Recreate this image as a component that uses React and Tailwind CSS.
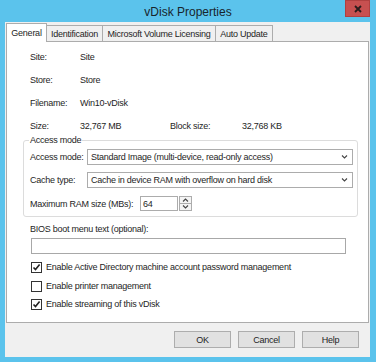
import React from 'react';

function Chevron({ up }) {
    return (
        <svg width="7" height="4" viewBox="0 0 7 4">
            <path d={up ? 'M1 3.5L3.5 1L6 3.5' : 'M1 0.5L3.5 3L6 0.5'} fill="none" stroke="#444" strokeWidth="1.1" />
        </svg>
    );
}

function Select({ value }) {
    return (
        <div className="flex h-[16px] flex-1 items-center justify-between border border-[#acacac] bg-white pl-[3px] pr-[4px]">
            <span>{value}</span>
            <Chevron />
        </div>
    );
}

function Checkbox({ checked, label }) {
    return (
        <div className="flex h-[12px] items-center">
            <span className="flex h-[11px] w-[11px] items-center justify-center border border-[#333] bg-white">
                {checked && (
                    <svg width="9" height="9" viewBox="0 0 9 9">
                        <path d="M1.5 4.5L3.5 6.6L7.6 1.6" fill="none" stroke="#222" strokeWidth="1.6" />
                    </svg>
                )}
            </span>
            <span className="ml-[4px]">{label}</span>
        </div>
    );
}

function InfoRow({ label, value }) {
    return (
        <div className="flex h-[16px] items-center">
            <span className="w-[50px]">{label}</span>
            <span>{value}</span>
        </div>
    );
}

export default function App() {
    const tabs = ['Identification', 'Microsoft Volume Licensing', 'Auto Update'];
    const tabWidths = ['w-[57px]', 'w-[114px]', 'w-[58px]'];

    return (
        <div className="flex h-[362px] w-[376px] flex-col bg-[#5bc3ec] font-['Liberation_Sans',Arial,sans-serif] text-[9px] leading-[12px] tracking-[-0.25px] text-[#1e1e1e]">
            {/* title bar */}
            <div className="flex h-[22px] items-start">
                <div className="w-[31px]" />
                <div className="flex-1 pt-[5px] text-center text-[12px] leading-[14px] tracking-normal text-[#18252c]">vDisk Properties</div>
                <div className="flex h-[17px] w-[25px] items-center justify-center border border-[#b04040] bg-[#c75050]">
                    <svg width="8" height="8" viewBox="0 0 8 8">
                        <path d="M1 1L7 7M7 1L1 7" stroke="#2a1c1c" strokeWidth="1.8" />
                    </svg>
                </div>
                <div className="w-[6px]" />
            </div>

            <div className="mb-[5px] ml-[5px] mr-[6px] flex flex-1 flex-col bg-[#f0f0f0] px-[1px] pt-[1px]">
                {/* tabs */}
                <div className="flex h-[18px] items-end">
                    <div className="relative z-10 mb-[-1px] flex h-[19px] w-[41px] items-center justify-center border border-b-0 border-[#acacac] bg-white">
                        General
                    </div>
                    {tabs.map((t, i) => (
                        <div
                            key={t}
                            className={`ml-[-1px] flex h-[16px] items-center justify-center border border-b-0 border-[#acacac] bg-[#f0f0f0] ${tabWidths[i]}`}
                        >
                            {t}
                        </div>
                    ))}
                </div>

                {/* panel */}
                <div className="flex flex-1 flex-col border border-[#acacac] bg-white">
                    <div className="ml-[23px] mt-[7px] flex flex-col gap-[7px]">
                        <InfoRow label="Site:" value="Site" />
                        <InfoRow label="Store:" value="Store" />
                        <InfoRow label="Filename:" value="Win10-vDisk" />
                        <div className="flex h-[16px] items-center">
                            <span className="w-[50px]">Size:</span>
                            <span className="w-[90px]">32,767 MB</span>
                            <span className="w-[72px]">Block size:</span>
                            <span>32,768 KB</span>
                        </div>
                    </div>

                    <fieldset className="ml-[16px] mr-[10px] rounded-[3px] border border-[#dcdcdc] pb-[5px] pl-[6px] pr-[4px]">
                        <legend className="-ml-[1px] px-[1px] leading-[12px]">Access mode</legend>
                        <div className="mt-[3px] flex h-[16px] items-center">
                            <span className="w-[57px]">Access mode:</span>
                            <Select value="Standard Image (multi-device, read-only access)" />
                        </div>
                        <div className="mt-[7px] flex h-[16px] items-center">
                            <span className="w-[57px]">Cache type:</span>
                            <Select value="Cache in device RAM with overflow on hard disk" />
                        </div>
                        <div className="mt-[8px] flex h-[15px] items-center">
                            <span className="w-[110px]">Maximum RAM size (MBs):</span>
                            <div className="flex h-[15px] w-[38px] items-center border border-[#acacac] bg-white pl-[2px]">64</div>
                            <div className="ml-[1px] flex h-[15px] w-[13px] flex-col">
                                <div className="flex flex-1 items-center justify-center border border-[#acacac] bg-[#f4f4f4]">
                                    <Chevron up />
                                </div>
                                <div className="flex flex-1 items-center justify-center border border-t-0 border-[#acacac] bg-[#f4f4f4]">
                                    <Chevron />
                                </div>
                            </div>
                        </div>
                    </fieldset>

                    <div className="ml-[23px] mt-[6px] h-[12px]">BIOS boot menu text (optional):</div>
                    <div className="ml-[24px] mt-[3px] h-[16px] w-[315px] border border-[#a8a8a8] bg-white" />

                    <div className="ml-[24px] mt-[7px]">
                        <Checkbox checked label="Enable Active Directory machine account password management" />
                    </div>
                    <div className="ml-[24px] mt-[7px]">
                        <Checkbox label="Enable printer management" />
                    </div>
                    <div className="ml-[24px] mt-[6px]">
                        <Checkbox checked label="Enable streaming of this vDisk" />
                    </div>
                </div>

                {/* buttons */}
                <div className="flex h-[34px] items-start justify-end gap-[7px] pr-[10px] pt-[8px]">
                    {['OK', 'Cancel', 'Help'].map((b) => (
                        <div key={b} className="flex h-[17px] w-[57px] items-center justify-center border border-[#adadad] bg-[#e1e1e1]">
                            {b}
                        </div>
                    ))}
                </div>
            </div>
        </div>
    );
}
